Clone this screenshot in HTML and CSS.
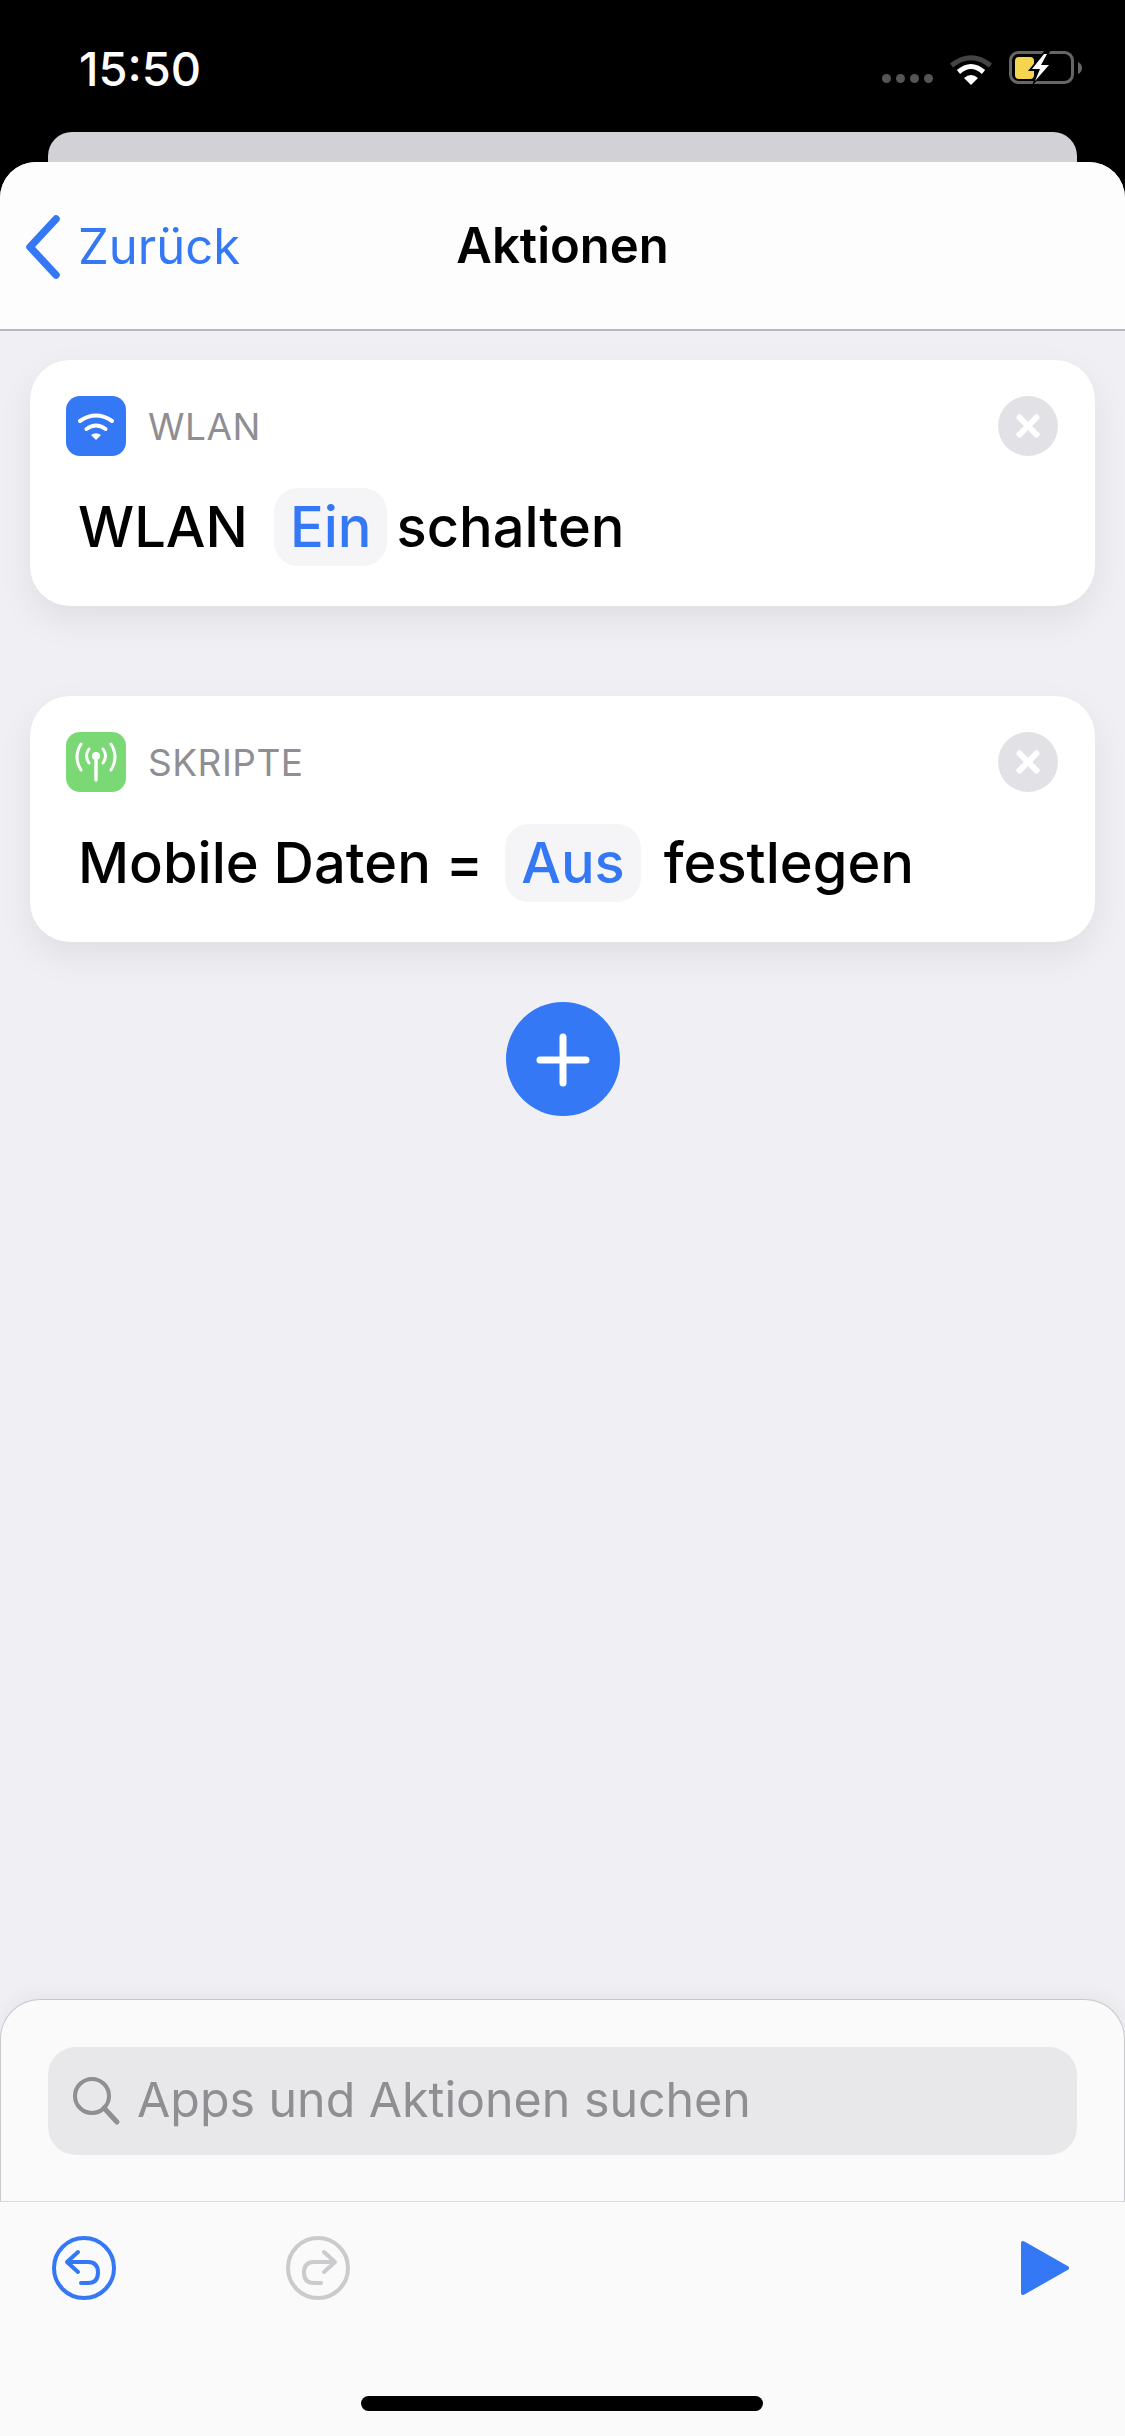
FILE: index.html
```html
<!DOCTYPE html>
<html lang="de">
  <head>
    <meta charset="utf-8" />
    <title>Aktionen</title>
    <link rel="stylesheet" href="styles.css">
  </head>
  <body>
    <div class="status-bar">
      <span class="time">15:50</span>
      <div class="status-icons">
        <div class="signal"><i></i><i></i><i></i><i></i></div>
        <svg class="status-wifi" width="44" height="32" viewBox="0 0 44 32">
          <path d="M2.5 12.5 Q22 -3 41.5 12.5" fill="none" stroke="#444" stroke-width="5" />
          <path d="M9.5 19 Q22 8 34.5 19" fill="none" stroke="#fff" stroke-width="5" />
          <path d="M15 25 Q22 19 29 25 L22 32 Z" fill="#fff" />
        </svg>
        <svg class="status-battery" width="74" height="34" viewBox="0 0 74 34">
          <rect x="1.5" y="1.5" width="62" height="30" rx="8" fill="none" stroke="#666" stroke-width="3" />
          <path d="M69 11 Q73 13 73 17 Q73 21 69 23 Z" fill="#666" />
          <rect x="6" y="6" width="19" height="22" rx="4" fill="#f5d44f" />
          <path d="M36 -1 L19 20 H28 L23 35 L44 12 H34 L42 -1 Z" fill="#000" />
          <path d="M35 3 L23 18 H31 L26 30 L40 14 H32 L38 3 Z" fill="#fff" />
        </svg>
      </div>
    </div>

    <div class="sheet-behind"></div>

    <div class="sheet">
      <header class="nav">
        <div class="back">
          <svg width="38" height="64" viewBox="0 0 38 64">
            <path d="M32 4 L6 32 L32 60" fill="none" stroke="#3478f6" stroke-width="7.500" stroke-linecap="round" stroke-linejoin="round" />
          </svg>
          <span>Zurück</span>
        </div>
        <div class="nav-title">Aktionen</div>
      </header>

      <main class="actions">
        <section class="card">
          <div class="card-head">
            <span class="app-icon blue">
              <svg width="60" height="60" viewBox="0 0 60 60">
                <path d="M14 25 Q30 14 46 25" fill="none" stroke="#fff" stroke-width="4" stroke-linecap="round" />
                <path d="M20.5 33 Q30 26 39.5 33" fill="none" stroke="#fff" stroke-width="4" stroke-linecap="round" />
                <path d="M25 39 Q30 35.500 35 39 L30 44 Z" fill="#fff" />
              </svg>
            </span>
            <span class="app-name">WLAN</span>
            <span class="remove">
              <svg width="60" height="60" viewBox="0 0 60 60">
                <path d="M21.500 21.500 L38.500 38.500 M38.500 21.500 L21.500 38.500" stroke="#fff" stroke-width="6" stroke-linecap="round" />
              </svg>
            </span>
          </div>
          <div class="card-line">
            <span>WLAN</span>
            <span class="token first">Ein</span>
            <span class="after-first">schalten</span>
          </div>
        </section>

        <section class="card">
          <div class="card-head">
            <span class="app-icon green">
              <svg width="60" height="60" viewBox="0 0 60 60">
                <path d="M30 24 V48" stroke="#fff" stroke-width="3.500" stroke-linecap="round" />
                <circle cx="30" cy="24" r="4" fill="#fff" />
                <path d="M23 17 Q18 24 23 31 M37 17 Q42 24 37 31" fill="none" stroke="#fff" stroke-width="3" stroke-linecap="round" />
                <path d="M15 12 Q7 25 15 38 M45 12 Q53 25 45 38" fill="none" stroke="#fff" stroke-width="3" stroke-linecap="round" />
              </svg>
            </span>
            <span class="app-name">SKRIPTE</span>
            <span class="remove">
              <svg width="60" height="60" viewBox="0 0 60 60">
                <path d="M21.500 21.500 L38.500 38.500 M38.500 21.500 L21.500 38.500" stroke="#fff" stroke-width="6" stroke-linecap="round" />
              </svg>
            </span>
          </div>
          <div class="card-line">
            <span>Mobile Daten =</span>
            <span class="token second">Aus</span>
            <span class="after-second">festlegen</span>
          </div>
        </section>

        <button class="add">
          <svg width="114" height="114" viewBox="0 0 114 114">
            <path d="M57 35 V81 M34 58 H80" stroke="#fff" stroke-width="7" stroke-linecap="round" />
          </svg>
        </button>
      </main>

      <footer class="bottom">
        <div class="search-panel">
          <div class="search">
            <svg width="52" height="52" viewBox="0 0 52 52">
              <circle cx="22" cy="21" r="17" fill="none" stroke="#8e8e93" stroke-width="4" />
              <path d="M34 33 L47 47" stroke="#8e8e93" stroke-width="5" stroke-linecap="round" />
            </svg>
            <span class="search-text">Apps und Aktionen suchen</span>
          </div>
        </div>
        <div class="toolbar">
          <div class="tools">
            <svg class="undo" width="64" height="64" viewBox="0 0 64 64">
              <circle cx="32" cy="32" r="30" fill="none" stroke="#3478f6" stroke-width="4" />
              <path d="M26 16 L15 26 L26 36 M15 26 H36 Q46 26 46 36.500 Q46 47 36 47 H29" fill="none" stroke="#3478f6" stroke-width="4" stroke-linecap="round" stroke-linejoin="round" />
            </svg>
            <svg class="redo" width="64" height="64" viewBox="0 0 64 64">
              <circle cx="32" cy="32" r="30" fill="none" stroke="#cbcbcd" stroke-width="4" />
              <path d="M38 16 L49 26 L38 36 M49 26 H28 Q18 26 18 36.500 Q18 47 28 47 H35" fill="none" stroke="#cbcbcd" stroke-width="4" stroke-linecap="round" stroke-linejoin="round" />
            </svg>
            <svg class="play" width="50" height="56" viewBox="0 0 50 56">
              <path d="M3 3 L47 28 L3 53 Z" fill="#3478f6" stroke="#3478f6" stroke-width="4" stroke-linejoin="round" />
            </svg>
          </div>
          <div class="home-bar"></div>
        </div>
      </footer>
    </div>
  </body>
</html>
```

FILE: styles.css
```css
* {
  box-sizing: border-box;
}
body {
  margin: 0;
  width: 1125px;
  height: 2436px;
  overflow: hidden;
  background: #000;
  display: flex;
  flex-direction: column;
  font-family: Inter, "Liberation Sans", sans-serif;
}

.status-bar {
  height: 132px;
  flex-shrink: 0;
  display: flex;
  justify-content: space-between;
  align-items: flex-start;
  padding: 44px 42px 0 79px;
  color: #fff;
}
.time {
  font-size: 47px;
  font-weight: 500;
  line-height: 50px;
}
.status-icons {
  display: flex;
  align-items: flex-start;
  margin-top: 7px;
}
.signal {
  display: flex;
  gap: 5px;
  margin: 23px 16px 0 0;
}
.signal i {
  width: 9px;
  height: 9px;
  border-radius: 50%;
  background: #555;
}
.status-wifi {
  margin: 2px 16px 0 0;
}

.sheet-behind {
  height: 30px;
  flex-shrink: 0;
  margin: 0 48px;
  background: #d2d2d6;
  border-radius: 24px 24px 0 0;
}

.sheet {
  flex: 1;
  display: flex;
  flex-direction: column;
  background: #efeff4;
  border-radius: 36px 36px 0 0;
  overflow: hidden;
}

.nav {
  height: 169px;
  flex-shrink: 0;
  position: relative;
  display: flex;
  align-items: flex-end;
  padding: 0 0 50px 24px;
  background: #fdfdfe;
  border-bottom: 2px solid #b9b9bc;
}
.back {
  display: flex;
  align-items: center;
  gap: 16px;
  color: #3478f6;
  font-size: 49px;
  line-height: 64px;
}
.nav-title {
  position: absolute;
  left: 0;
  right: 0;
  bottom: 55px;
  text-align: center;
  font-size: 49px;
  font-weight: 600;
  line-height: 56px;
  color: #000;
}

.actions {
  flex: 1;
  display: flex;
  flex-direction: column;
  align-items: center;
  gap: 90px;
  padding-top: 29px;
}
.card {
  width: 1065px;
  height: 246px;
  padding: 36px 37px 0 36px;
  background: #fff;
  border-radius: 40px;
  box-shadow: 0 14px 36px rgba(0, 0, 0, 0.07);
}
.card-head {
  display: flex;
  align-items: center;
  height: 60px;
}
.app-icon {
  width: 60px;
  height: 60px;
  border-radius: 14px;
  display: block;
}
.app-icon svg,
.remove svg,
.add svg {
  display: block;
}
.blue {
  background: #3478f6;
}
.green {
  background: #7ad975;
}
.app-name {
  margin-left: 22px;
  font-size: 37px;
  letter-spacing: 0.5px;
  color: #8e8e93;
}
.remove {
  margin-left: auto;
  width: 60px;
  height: 60px;
  border-radius: 50%;
  background: #e2e2e6;
}
.card-line {
  display: flex;
  align-items: center;
  height: 78px;
  margin-top: 32px;
  padding-left: 12px;
  font-size: 56px;
  font-weight: 450;
  color: #000;
}
.token {
  height: 78px;
  display: flex;
  align-items: center;
  padding: 0 16px;
  border-radius: 24px;
  background: #f5f5f7;
  color: #3478f6;
}
.first {
  margin-left: 26px;
}
.after-first {
  margin-left: 9px;
}
.second {
  margin-left: 22px;
}
.after-second {
  margin-left: 23px;
}

.add {
  width: 114px;
  height: 114px;
  margin-top: -30px;
  padding: 0;
  border: 0;
  border-radius: 50%;
  background: #3478f6;
}

.bottom {
  flex-shrink: 0;
}
.search-panel {
  height: 203px;
  padding: 47px 47px 0;
  background: #fafafb;
  border: 1px solid #c8c8cc;
  border-bottom: 1px solid #dcdcde;
  border-radius: 40px 40px 0 0;
  box-shadow: 0 -6px 18px rgba(0, 0, 0, 0.04);
}
.search {
  height: 108px;
  display: flex;
  align-items: center;
  gap: 15px;
  padding-left: 22px;
  background: #e8e8ea;
  border-radius: 28px;
  font-size: 48.300px;
  color: #8e8e93;
}
.search-text {
  margin-bottom: 4px;
}
.toolbar {
  height: 234px;
  background: #fafafb;
  padding: 34px 55px 0 52px;
}
.tools {
  display: flex;
  align-items: center;
}
.redo {
  margin-left: 170px;
}
.play {
  margin-left: auto;
}
.home-bar {
  width: 402px;
  height: 15px;
  margin: 96px auto 0;
  position: relative;
  left: 1px;
  border-radius: 8px;
  background: #000;
}
```
